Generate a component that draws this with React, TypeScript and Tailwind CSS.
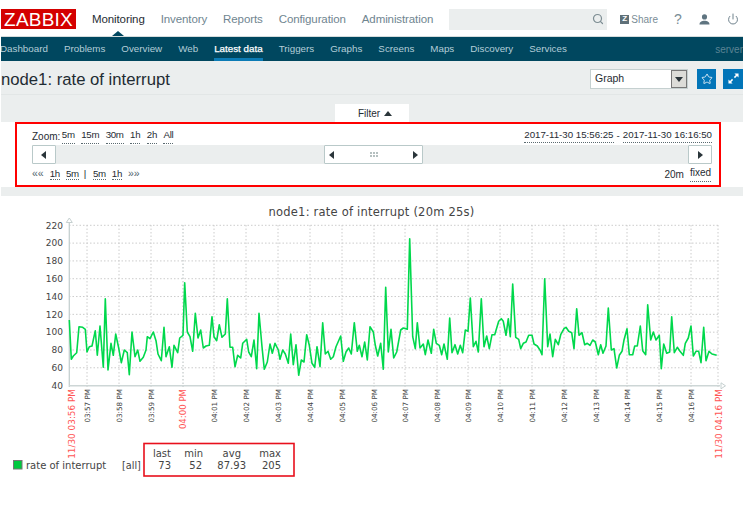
import React from "react";
import { Search, Power, Star } from "lucide-react";

const seg = (o: number, s: string) =>
  s.trim().split(/\s+/).map((p) => {
    const [x, y] = p.split(",").map(Number);
    return `${(o + x / 3).toFixed(1)},${(200 + y / 3).toFixed(1)}`;
  }).join(" ");

const line = [
  seg(30, "118,360 124,478 130,468 140,458 147,380 158,382 166,388 171,456 178,440 186,438 196,392 202,466 210,378 220,502 226,296 234,510 243,430 250,466 257,402 266,444 274,488 283,450 292,458 298,524 306,396 315,470 323,450 330,484 340,472 348,450 352,410 360,416 370,396 378,422 384,462 394,482 402,382 408,470 418,440 426,502 432,436 443,458 449,414 459,406 464,248 472,396 480,410 488,454 496,340 504,414 512,390 520,444 528,438 538,436 546,350 552,410 560,422 568,374 576,412 586,402 592,296 600,442 608,442 615,500 623,466 632,474 638,430 650,418 656,456 664,470 672,420 680,506 687,340 696,440 703,508 712,486 720,432 727,460 735,430 745,450"),
  seg(270, "30,478 38,450 46,462 55,490 62,402 70,494 78,434 86,526 94,480 102,486 110,404 118,436 126,490 134,502 141,440 150,500 158,368 166,462 174,454 182,478 190,470 198,440 212,408 220,484 228,456 236,444 244,462 253,368 262,454 268,436 276,470 284,426 292,480 300,380 310,396 316,436 323,468 332,430 340,508 347,262 355,456 363,388 371,474 380,456 392,390 400,384 412,388 419,116 428,410 436,446 442,368 450,444 460,432 466,464 474,420 484,460 491,388 499,430 508,436 515,464 522,432 532,478 539,354 546,458 555,434 563,462 571,436 578,458 586,390 594,394 601,294 610,440 618,424 625,456 634,296 642,440 650,408 658,446 666,404 674,404 686,364 694,356 700,364 708,406 715,356"),
  seg(500, "31,410 38,252 47,412 56,418 62,446 70,430 78,426 86,406 96,406 102,432 112,438 120,450 126,464 134,236 143,440 150,402 158,470 166,418 175,434 182,404 192,386 198,382 206,394 215,398 222,446 230,326 237,406 246,398 254,434 262,430 270,436 278,420 286,426 295,464 302,434 309,460 318,438 325,324 334,450 342,446 350,504 358,466 366,454 372,420 381,386 388,464 398,464 404,438 412,438 421,378 428,452 437,464 443,314 452,420 460,396 468,420 478,406 484,506 491,432 500,460 509,456 515,350 523,458 532,442 540,454 550,466 556,430 565,414 573,378 580,468 588,454 596,454 603,488 611,382 618,482 627,454 636,462 650,466"),
].join(" ");

const ticks: [number, string, boolean?][] = [
  [87, "03:57 PM"], [119, "03:58 PM"], [151, "03:59 PM"], [183, "04:00 PM", true], [214, "04:01 PM"],
  [246, "04:02 PM"], [278, "04:03 PM"], [310, "04:04 PM"], [342, "04:05 PM"], [374, "04:06 PM"],
  [405, "04:07 PM"], [437, "04:08 PM"], [468, "04:09 PM"], [500, "04:10 PM"], [532, "04:11 PM"],
  [564, "04:12 PM"], [596, "04:13 PM"], [627, "04:14 PM"], [659, "04:15 PM"], [691, "04:16 PM"],
];
const yVals = [220, 200, 180, 160, 140, 120, 100, 80, 60, 40];
const yAt = (i: number) => 225.3 + i * 17.81;

const DEJAVU = "'DejaVu Sans', sans-serif";

function Graph() {
  const vLabel = (x: number, s: string, color: string, size: number, key: string) => (
    <text key={key} transform={`translate(${x},389) rotate(-90)`} textAnchor="end" fontFamily={DEJAVU} fontSize={size} fill={color}>{s}</text>
  );
  return (
    <svg viewBox="1 196 742 312" className="block w-[742px] h-[312px]">
      <text x="371.5" y="216" textAnchor="middle" fontFamily={DEJAVU} fontSize="11.5" letterSpacing="0.22" fill="#444">node1: rate of interrupt (20m 25s)</text>
      {yVals.slice(0, 9).map((v, i) => (
        <line key={v} x1="69" x2="718" y1={yAt(i)} y2={yAt(i)} stroke="#ccc" strokeDasharray="1.5 2" />
      ))}
      {ticks.map(([x, , red]) => (
        <line key={x} x1={x} x2={x} y1="225" y2="387" stroke={red ? "#b4bcbc" : "#ccc"} strokeDasharray="1.5 2" />
      ))}
      <line x1="718" x2="718" y1="225" y2="387" stroke="#ccc" strokeDasharray="1.5 2" />
      <line x1="69.3" x2="69.3" y1="222" y2="387" stroke="#c5d0d0" strokeWidth="1.3" />
      <line x1="69" x2="720" y1="385.8" y2="385.8" stroke="#cdd6d6" strokeWidth="1.6" />
      <path d="M69.3 218l3 4.5h-6z" fill="#fff" stroke="#c5d0d0" />
      <path d="M725.5 385.8l-4.5 3v-6z" fill="#fff" stroke="#c5d0d0" />
      {yVals.map((v, i) => (
        <text key={v} x="63" y={yAt(i) + 3.2} textAnchor="end" fontFamily={DEJAVU} fontSize="9" fill="#444">{v}</text>
      ))}
      <polyline points={line} fill="none" stroke="#00d84c" strokeWidth="1.6" strokeLinejoin="round" />
      {vLabel(75, "11/30 03:56 PM", "#ff5555", 8.9, "a")}
      {vLabel(722, "11/30 04:16 PM", "#ff5555", 8.9, "b")}
      {ticks.map(([x, s, red]) => vLabel(x + 3, s, red ? "#ff5555" : "#444", red ? 8.6 : 7.2, s))}
      <rect x="13.5" y="460.5" width="8.5" height="8.5" fill="#00c93f" stroke="#777" />
      <text x="26" y="468.5" fontFamily={DEJAVU} fontSize="10" fill="#444">rate of interrupt</text>
      <text x="122" y="468.5" fontFamily={DEJAVU} fontSize="9.7" fill="#444">[all]</text>
      {[["last", 171, "73", 171], ["min", 203, "52", 202], ["avg", 241, "87.93", 246], ["max", 281, "205", 281]].map(([h, hx, v, vx]) => (
        <g key={h as string} fontFamily={DEJAVU} fontSize="10" fill="#444" textAnchor="end">
          <text x={hx as number} y="457">{h}</text>
          <text x={vx as number} y="468.5">{v}</text>
        </g>
      ))}
      <rect x="144" y="443.5" width="150" height="32.5" fill="none" stroke="#e8101c" strokeWidth="1.6" />
    </svg>
  );
}

function Tri({ dir, className = "" }: { dir: "l" | "r" | "u" | "d"; className?: string }) {
  const d = { l: "M1 4l5-4v8z", r: "M7 4l-5-4v8z", u: "M4 1l4 5H0z", d: "M4 7l4-5H0z" }[dir];
  return (
    <svg viewBox="0 0 8 8" className={`w-[8px] h-[8px] fill-[#2a353a] ${className}`}><path d={d} /></svg>
  );
}

const L = ({ children }: { children: React.ReactNode }) => (
  <span className="border-b border-dotted border-[#5a6a70] leading-[11px] text-[#1f2c33]">{children}</span>
);

const BtnCls = "flex items-center h-[19px] bg-white border border-[#b9c9c9] rounded-[1px]";

export default function App() {
  return (
    <div className="w-[747px] h-[508px] overflow-hidden bg-white font-['Liberation_Sans',Arial,sans-serif]">
      <div className="w-[742px] ml-px">
        {/* top bar */}
        <div className="relative flex items-center h-[37px] pt-[2px] border-b border-[#d5dcdc] bg-white">
          <div className="flex items-center justify-center shrink-0 w-[75px] h-[20px] bg-[#d40000] text-white text-[19px] leading-none tracking-[0.2px]">ZABBIX</div>
          <nav className="flex items-center shrink-0 gap-[16px] ml-[16px] pt-[1px] text-[11.5px] text-[#6f8590] tracking-[-0.1px]">
            <span className="text-[#1f2c33]">Monitoring</span>
            <span>Inventory</span>
            <span>Reports</span>
            <span>Configuration</span>
            <span>Administration</span>
          </nav>
          <div className="flex items-center justify-end shrink-0 w-[158px] h-[21px] ml-[16px] pr-[3px] bg-[#ebeeee]">
            <Search size={12} strokeWidth={2.4} className="text-[#7d8d93]" />
          </div>
          <div className="flex items-center shrink-0 ml-[13px] text-[10px] text-[#7a8d96]">
            <span className="flex items-center justify-center w-[9px] h-[9px] mr-[2px] bg-[#5f7078] text-white text-[8px] font-bold leading-none">Z</span>
            Share
          </div>
          <span className="ml-[16px] shrink-0 text-[14px] leading-none text-[#7a8d96]">?</span>
          <svg viewBox="0 0 12 12" className="ml-[17px] shrink-0 w-[11px] h-[11px] fill-[#5f7480]">
            <circle cx="6" cy="3.2" r="2.8" />
            <path d="M0.5 11.5c0-3 2.5-4.2 5.5-4.2s5.5 1.2 5.5 4.2z" />
          </svg>
          <Power size={12} strokeWidth={1.8} className="ml-[17px] shrink-0 text-[#5f7480]" />
          <span className="absolute left-[111px] top-[31px] w-0 h-0 border-x-[6px] border-x-transparent border-b-[5px] border-b-[#00475f]" />
        </div>
        {/* sub nav */}
        <div className="flex items-center justify-between h-[24px] bg-[#00475f] text-[9.8px] text-[#b3cdd8] overflow-hidden">
          <div className="flex h-full items-center gap-[16px] -ml-px">
            <span>Dashboard</span>
            <span>Problems</span>
            <span>Overview</span>
            <span>Web</span>
            <span className="flex items-center h-full pt-[3px] border-b-[3px] border-[#0b7bb5] text-white [-webkit-text-stroke:0.25px_white]">Latest data</span>
            <span>Triggers</span>
            <span>Graphs</span>
            <span>Screens</span>
            <span>Maps</span>
            <span>Discovery</span>
            <span>Services</span>
          </div>
          <span className="text-[10px] text-[#5b8494]">server</span>
        </div>
        {/* title */}
        <div className="flex items-center justify-between h-[34px] pt-[2px] bg-[#ebeeee] border-b border-[#e2e6e6]">
          <h1 className="mt-[4px] text-[16.7px] leading-none text-[#1f2c33]">node1: rate of interrupt</h1>
          <div className="flex items-center">
            <div className="flex items-center justify-between w-[98px] h-[20px] bg-white border border-[#c5d0d0] pl-[4px] text-[10.5px] text-[#1f2c33]">
              Graph
              <span className="flex items-center justify-center w-[16px] h-[18px] bg-[#dcdcd8] border border-[#777]">
                <Tri dir="d" />
              </span>
            </div>
            <span className="flex items-center justify-center w-[19px] h-[20px] ml-[9px] bg-[#0275b8]">
              <Star size={12} strokeWidth={1.6} className="text-white" />
            </span>
            <span className="flex items-center justify-center w-[20px] h-[20px] ml-[7px] bg-[#0275b8]">
              <svg viewBox="0 0 12 12" className="w-[11px] h-[11px] fill-white">
                <path d="M7 0.5h4.5V5L9.8 3.4 7.6 5.6 6.4 4.4 8.6 2.2zM5 11.5H0.5V7l1.7 1.6 2.2-2.2 1.2 1.2-2.2 2.2z" />
              </svg>
            </span>
          </div>
        </div>
        {/* filter tab strip */}
        <div className="flex justify-center h-[27px] bg-[#ebeeee] pt-[9px]">
          <div className="flex items-center justify-center gap-[4px] w-[74px] h-[18px] pl-[6px] pt-[1px] bg-white text-[10px] text-[#1f2c33]">
            Filter <Tri dir="u" />
          </div>
        </div>
        {/* time controls */}
        <div className="bg-white">
          <div className="ml-[14px] w-[706px] h-[65px] border-2 border-[#f00] pl-[15px] pr-[7px] pt-[3px] text-[9.7px] text-[#1f2c33]">
            <div className="flex justify-between h-[18px] items-center">
              <div className="flex gap-[6.5px] tracking-[-0.3px]">
                <span className="-mr-[5px] text-[10px] tracking-normal">Zoom:</span>
                <L>5m</L><L>15m</L><L>30m</L><L>1h</L><L>2h</L><L>All</L>
              </div>
              <div className="flex gap-[3px]">
                <L>2017-11-30 15:56:25</L>
                <span>-</span>
                <L>2017-11-30 16:16:50</L>
              </div>
            </div>
            <div className="flex items-center h-[19px] bg-[#ebeeee]">
              <span className={`${BtnCls} w-[24px] justify-center`}><Tri dir="l" /></span>
              <span className={`${BtnCls} w-[99px] ml-[268px] justify-between px-[3px]`}>
                <Tri dir="l" />
                <svg viewBox="0 0 8 5" className="w-[8px] h-[5px] fill-[#b5c0c0]">
                  <rect x="0" y="0" width="2" height="2" /><rect x="3" y="0" width="2" height="2" /><rect x="6" y="0" width="2" height="2" />
                  <rect x="0" y="3" width="2" height="2" /><rect x="3" y="3" width="2" height="2" /><rect x="6" y="3" width="2" height="2" />
                </svg>
                <Tri dir="r" />
              </span>
              <span className={`${BtnCls} w-[24px] ml-auto justify-center`}><Tri dir="r" /></span>
            </div>
            <div className="flex justify-between h-[18px] items-center mt-[1px]">
              <div className="flex gap-[6px] items-center tracking-[-0.3px]">
                <span className="text-[#52666f] text-[10.5px] tracking-normal">««</span>
                <L>1h</L><L>5m</L>
                <span className="-ml-[1px] mr-[1px]">|</span>
                <L>5m</L><L>1h</L>
                <span className="text-[#52666f] text-[10.5px] tracking-normal">»»</span>
              </div>
              <div className="flex gap-[6px] text-[10px] mr-[1px]">
                <span>20m</span>
                <L>fixed</L>
              </div>
            </div>
          </div>
        </div>
        <div className="h-[9px] bg-[#ebeeee]" />
        <Graph />
      </div>
    </div>
  );
}
